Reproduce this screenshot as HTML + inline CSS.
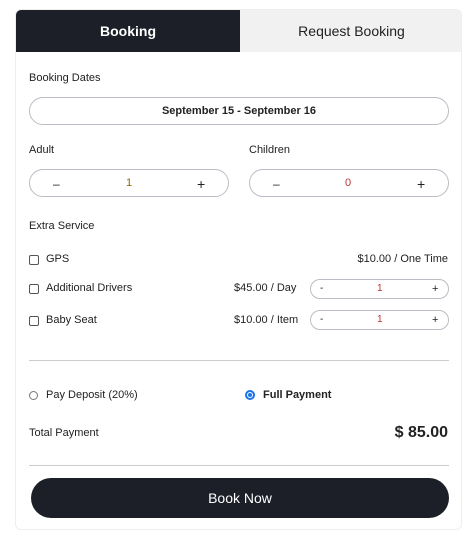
<!DOCTYPE html>
<html><head><style>
*{box-sizing:border-box;margin:0;padding:0}
body{width:466px;height:543px;background:#fff;font-family:"Liberation Sans",sans-serif;color:#222;position:relative;overflow:hidden}
.card{position:absolute;left:15px;top:9px;width:447px;height:521px;border:1px solid #eee;border-radius:6px;overflow:hidden}
.tab{position:absolute;top:0;height:42px;line-height:42px;text-align:center;font-size:14px}
.t1{left:0;width:224px;background:#1c1f27;color:#fff;font-weight:bold}
.t2{left:224px;width:223px;background:#f1f1f1;color:#222}
.a{position:absolute;font-size:11px;line-height:14px;white-space:nowrap}
.pill{position:absolute;border:1px solid #b9bdc3;border-radius:14px}
.st{position:absolute;font-size:12px;line-height:14px}
.cb{position:absolute;width:10px;height:10px;border:1px solid #555;border-radius:2px}
.hr{position:absolute;left:13px;width:420px;height:1px;background:#ccc}
</style></head><body>
<div class="card">
<div class="tab t1">Booking</div><div class="tab t2">Request Booking</div>
<div class="a" style="left:13px;top:61px">Booking Dates</div>
<div class="pill" style="left:13px;top:87px;width:420px;height:28px;text-align:center;font-size:11px;font-weight:bold;line-height:26px">September 15 - September 16</div>
<div class="a" style="left:13px;top:133px">Adult</div>
<div class="a" style="left:233px;top:133px">Children</div>
<div class="pill" style="left:13px;top:159px;width:200px;height:28px"></div>
<div class="st" style="left:37px;top:167px">–</div><div class="st" style="left:110px;top:166px;color:#8a6a00;font-size:11px">1</div><div class="st" style="left:181px;top:167px;font-size:14px">+</div>
<div class="pill" style="left:233px;top:159px;width:200px;height:28px"></div>
<div class="st" style="left:257px;top:167px">–</div><div class="st" style="left:329px;top:166px;color:#b33;font-size:11px">0</div><div class="st" style="left:401px;top:167px;font-size:14px">+</div>
<div class="a" style="left:13px;top:209px">Extra Service</div>
<div class="cb" style="left:13px;top:245px"></div><div class="a" style="left:30px;top:242px">GPS</div>
<div class="a" style="right:13px;top:242px">$10.00 / One Time</div>
<div class="cb" style="left:13px;top:274px"></div><div class="a" style="left:30px;top:271px">Additional Drivers</div>
<div class="a" style="left:218px;top:271px">$45.00 / Day</div>
<div class="pill" style="left:294px;top:269px;width:139px;height:20px;border-radius:10px"></div>
<div class="st" style="left:304px;top:272px;font-size:10px">-</div><div class="st" style="left:361px;top:272px;font-size:10px;color:#b33">1</div><div class="st" style="left:416px;top:272px;font-size:11px">+</div>
<div class="cb" style="left:13px;top:306px"></div><div class="a" style="left:30px;top:303px">Baby Seat</div>
<div class="a" style="left:218px;top:303px">$10.00 / Item</div>
<div class="pill" style="left:294px;top:300px;width:139px;height:20px;border-radius:10px"></div>
<div class="st" style="left:304px;top:303px;font-size:10px">-</div><div class="st" style="left:361px;top:303px;font-size:10px;color:#b33">1</div><div class="st" style="left:416px;top:303px;font-size:11px">+</div>
<div class="hr" style="top:350px"></div>
<div style="position:absolute;left:13px;top:381px;width:9px;height:9px;border:1px solid #777;border-radius:50%"></div>
<div class="a" style="left:30px;top:378px">Pay Deposit (20%)</div>
<div style="position:absolute;left:229px;top:380px;width:10px;height:10px;border:2px solid #1a73e8;border-radius:50%;background:#fff"><div style="position:absolute;left:1px;top:1px;width:4px;height:4px;background:#1a73e8;border-radius:50%"></div></div>
<div class="a" style="left:247px;top:378px;font-weight:bold">Full Payment</div>
<div class="a" style="left:13px;top:416px">Total Payment</div>
<div class="a" style="right:13px;top:414px;font-size:16px;line-height:18px;font-weight:bold">$ 85.00</div>
<div class="hr" style="top:455px"></div>
<div style="position:absolute;left:15px;top:468px;width:418px;height:40px;border-radius:20px;background:#1c1f27;color:#fff;text-align:center;line-height:40px;font-size:14px">Book Now</div>
</div>
</body></html>
